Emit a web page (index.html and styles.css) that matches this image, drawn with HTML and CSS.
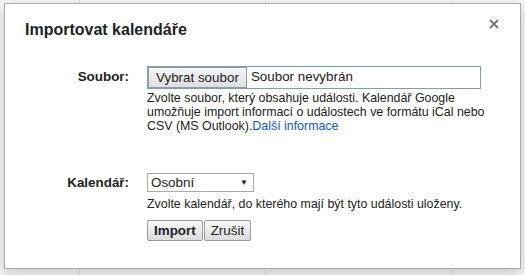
FILE: index.html
```html
<!DOCTYPE html>
<html lang="cs">
<head>
    <meta charset="UTF-8">
    <title>Importovat kalendáře</title>
    <link rel="stylesheet" href="styles.css">
</head>
<body>
    <div class="dialog">
        <div class="dialog-title">
            <span>Importovat kalendáře</span>
            <svg class="close" width="10" height="10" viewBox="0 0 10 10">
                <path d="M1 1 L9 9 M9 1 L1 9" stroke="#7a7a7a" stroke-width="2"/>
            </svg>
        </div>
        <div class="form">
            <div class="label">Soubor:</div>
            <div class="field">
                <div class="file-input">
                    <button class="btn-file">Vybrat soubor</button>
                    <span class="file-name">Soubor nevybrán</span>
                </div>
                <p class="hint">Zvolte soubor, který obsahuje události. Kalendář Google umožňuje import informací o událostech ve formátu iCal nebo CSV (MS Outlook).<a href="#">Další informace</a></p>
            </div>

            <div class="label label-cal">Kalendář:</div>
            <div class="field field-cal">
                <div class="select">
                    <span>Osobní</span>
                    <span class="arrow">&#9660;</span>
                </div>
                <p class="hint hint-cal">Zvolte kalendář, do kterého mají být tyto události uloženy.</p>
                <div class="buttons">
                    <button class="btn btn-main">Import</button>
                    <button class="btn">Zrušit</button>
                </div>
            </div>
        </div>
    </div>
</body>
</html>
```

FILE: styles.css
```css
html, body {
    margin: 0;
    height: 100%;
}
body {
    font-family: "Liberation Sans", Arial, sans-serif;
    color: #222;
    background-color: #f6f6f6;
    background-image:
        linear-gradient(to right, transparent 79px, #e4e4e4 79px, #e4e4e4 80px, transparent 80px),
        linear-gradient(to right, transparent 265px, #e4e4e4 265px, #e4e4e4 266px, transparent 266px),
        linear-gradient(to right, transparent 451px, #e4e4e4 451px, #e4e4e4 452px, transparent 452px);
    padding: 3px 4px 0 4px;
    box-sizing: border-box;
}
.dialog {
    background: #fff;
    border: 1px solid #acacac;
    box-shadow: 0 4px 12px rgba(0, 0, 0, 0.2);
    width: 517px;
    height: 266px;
    box-sizing: border-box;
    padding: 0 20px;
}
.dialog-title {
    display: flex;
    justify-content: space-between;
    align-items: center;
    font-size: 16px;
    font-weight: bold;
    height: 20px;
    margin-top: 16px;
}
.close {
    margin-right: 1px;
    margin-top: -13px;
}
.form {
    display: grid;
    grid-template-columns: 104px 1fr;
    column-gap: 18px;
    margin-top: 26px;
    font-size: 13.4px;
}
.label {
    text-align: right;
    font-weight: bold;
    padding-top: 3px;
}
.label-cal {
    margin-top: 40px;
    padding-top: 2px;
}
.field-cal {
    margin-top: 40px;
}
.file-input {
    display: flex;
    width: 334px;
    height: 23px;
    border: 1px solid #7f9db9;
    box-sizing: border-box;
}
.btn-file {
    font-family: inherit;
    font-size: 13.4px;
    color: #222;
    background: linear-gradient(#f6f6f6, #dedede);
    border: 1px solid #9a9a9a;
    margin: 0;
    padding: 0 7px;
    height: 21px;
}
.file-name {
    padding: 2px 4px;
}
.hint {
    margin: 2px 0 0 0;
    font-size: 12.4px;
    line-height: 14px;
    width: 340px;
}
.hint a {
    color: #15c;
    text-decoration: none;
}
.select {
    display: flex;
    justify-content: space-between;
    align-items: center;
    width: 107px;
    height: 19px;
    box-sizing: border-box;
    border: 1px solid #a9a9a9;
    padding: 0 5px 0 3px;
}
.arrow {
    font-size: 8px;
}
.hint-cal {
    margin-top: 5px;
}
.buttons {
    display: flex;
    gap: 1px;
    margin-top: 9px;
}
.btn {
    font-family: inherit;
    font-size: 13.4px;
    color: #222;
    background: linear-gradient(#f8f8f8, #dcdcdc);
    border: 1px solid #9a9a9a;
    border-radius: 2px;
    height: 21px;
    padding: 0 6px;
}
.btn-main {
    font-weight: bold;
    padding: 0 6px;
}
```
